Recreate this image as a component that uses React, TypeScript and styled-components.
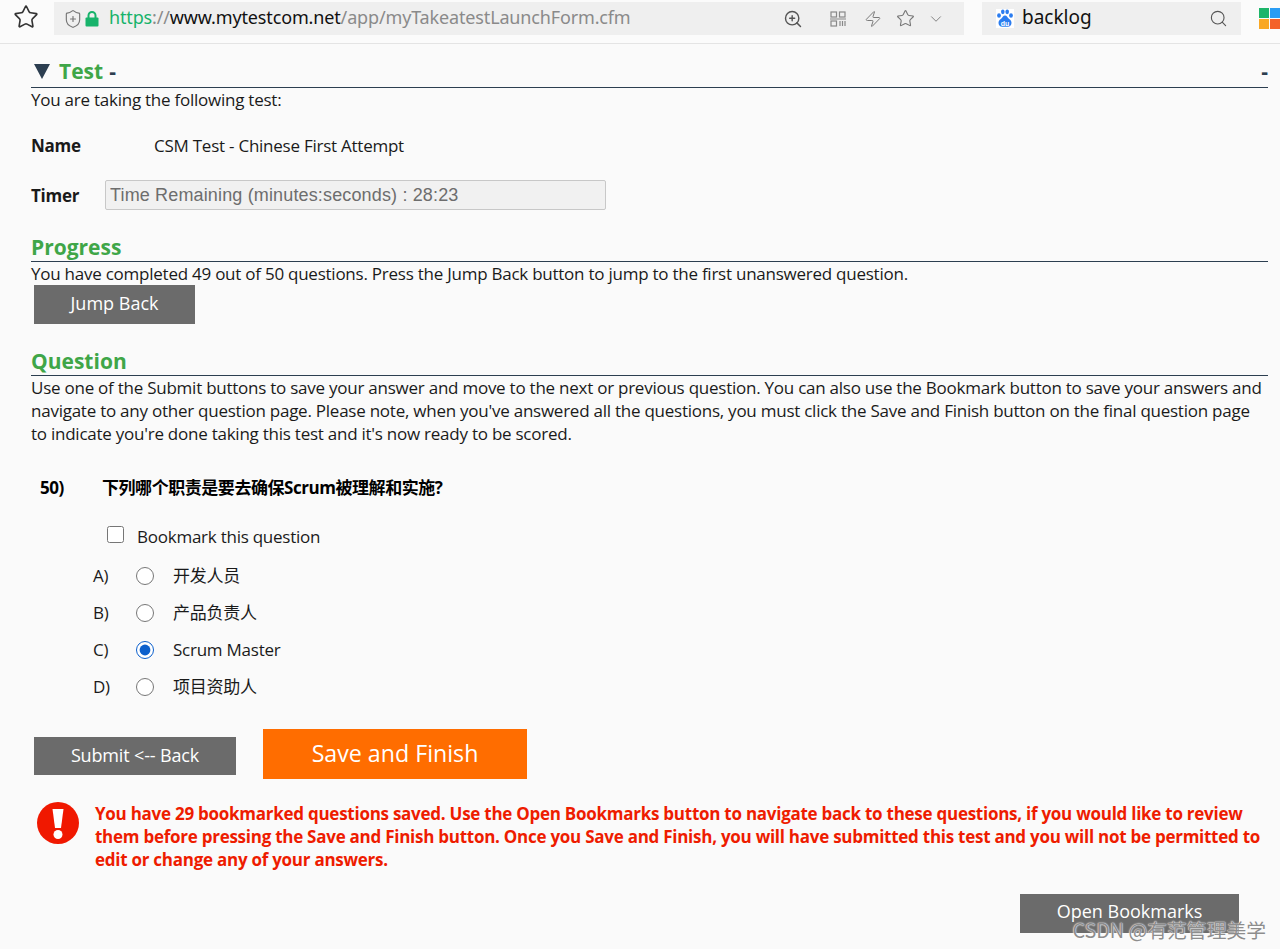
import { ReactNode } from 'react'
import styled, { createGlobalStyle } from 'styled-components'
import { ChevronDown, Search, ShieldPlus, Star, Zap, ZoomIn } from 'lucide-react'

const Global = createGlobalStyle`
html, body {
  margin: 0;
  padding: 0;
  height: 949px;
  overflow: hidden;
  background: #fafafa;
}
body {
  font-family: "Open Sans", "Noto Sans CJK SC", sans-serif;
  font-size: 17px;
  line-height: 23px;
  letter-spacing: -0.245px;
  color: #1a1a1a;
}
`

const Page = styled.div`
  position: relative;
  height: 949px;
  overflow: hidden;
`

const Chrome = styled.header`
  display: flex;
  align-items: flex-start;
  height: 43px;
  border-bottom: 1px solid #e4e4e4;
  background: #fbfbfb;
  box-sizing: content-box;
  letter-spacing: 0;
`

const BarStar = styled.div`
  display: flex;
  width: 54px;
  padding: 4px 0 0 13px;
  box-sizing: border-box;
  color: #333;
`

const UrlBar = styled.div`
  display: flex;
  align-items: center;
  width: 910px;
  height: 33px;
  margin-top: 2px;
  background: #efefef;
  box-sizing: border-box;
  padding-left: 9px;
`

const UrlText = styled.div`
  margin: -2px 0 0 8px;
  width: 669px;
  font-family: "Noto Sans", sans-serif;
  font-size: 18px;
  letter-spacing: -0.15px;
  color: #8a8a8a;
  white-space: nowrap;
`

const Https = styled.span`
  color: #17b36b;
`

const Host = styled.span`
  color: #111;
`

const IconSlot = styled.span<{ $w: number; $color?: string }>`
  display: flex;
  justify-content: center;
  width: ${p => p.$w}px;
  color: ${p => p.$color ?? '#777'};

  svg {
    flex: none;
  }
`

const SearchBar = styled.div`
  display: flex;
  align-items: center;
  width: 259px;
  height: 33px;
  margin: 2px 0 0 18px;
  padding: 0 13px 0 14px;
  box-sizing: border-box;
  background: #efefef;
`

const SearchText = styled.span`
  flex: 1;
  margin: -2px 0 0 8px;
  font-family: "Noto Sans", sans-serif;
  font-size: 19px;
  color: #111;
`

const Tiles = styled.div`
  display: grid;
  grid-template-columns: 10px 10px;
  grid-auto-rows: 10px;
  gap: 1px;
  margin: 8px 0 0 18px;
`

const Tile = styled.span<{ $c: string }>`
  background: ${p => p.$c};
`

const Content = styled.main`
  padding: 13px 12px 0 31px;
`

const Heading = styled.div`
  display: flex;
  align-items: center;
  height: 30px;
  border-bottom: 1px solid #2c3e50;
  box-sizing: content-box;
  font-size: 21px;
  font-weight: 700;
  letter-spacing: 0;
  color: #2c3e50;
`

const TestHeading = styled(Heading)`
  height: 28px;
  padding: 0 0 2px 3px;
`

const Arrow = styled.svg`
  width: 16px;
  height: 15px;
  margin-right: 9px;
`

const Green = styled.span`
  color: #3fa648;
`

const HeadDash = styled.span`
  margin-left: 6px;
  flex: 1;
`

const SubHeading = styled(Heading)`
  height: 27px;
  color: #3fa648;
`

const Text = styled.p`
  margin: 0;
`

const Row = styled.div<{ $mt: number; $labelW: number }>`
  display: grid;
  grid-template-columns: ${p => p.$labelW}px auto;
  align-items: center;
  justify-content: start;
  margin-top: ${p => p.$mt}px;
`

const Label = styled.span`
  font-weight: 700;
`

const Timer = styled.input`
  width: 501px;
  height: 30px;
  box-sizing: border-box;
  padding: 0 4px;
  border: 1px solid #c8c8c8;
  border-radius: 2px;
  background: #f1f1f1;
  font-family: "Liberation Sans", sans-serif;
  font-size: 18px;
  letter-spacing: 0.15px;
  color: #6d6d6d;
  outline: none;
`

const Section = styled.section<{ $mt: number }>`
  margin-top: ${p => p.$mt}px;
`

const GrayButton = styled.button<{ $w: number; $h: number; $lift?: number }>`
  display: block;
  width: ${p => p.$w}px;
  height: ${p => p.$h}px;
  padding: 0 0 ${p => p.$lift ?? 3}px;
  border: 0;
  background: #6b6b6b;
  color: #fff;
  font-family: inherit;
  font-size: 18px;
`

const JumpBack = styled(GrayButton)`
  margin: 0 0 0 3px;
`

const QuestionRow = styled.div`
  display: flex;
  margin: 31px 0 0 9px;
  font-weight: 700;
  letter-spacing: -0.45px;
  color: #000;
`

const QuestionNum = styled.span`
  width: 62px;
`

const BookmarkRow = styled.label`
  display: flex;
  align-items: center;
  height: 23px;
  margin: 26px 0 0 76px;
`

const Check = styled.input`
  width: 17px;
  height: 17px;
  margin: -4px 13px 0 0;
`

const Options = styled.div`
  display: flex;
  flex-direction: column;
  gap: 14px;
  margin: 16px 0 0 62px;
`

const Option = styled.label`
  display: flex;
  align-items: center;
  height: 23px;
`

const Letter = styled.span`
  width: 43px;
`

const Radio = styled.input`
  width: 18px;
  height: 18px;
  margin: 0 19px 0 0;
  accent-color: #0b5fcc;
`

const Actions = styled.div`
  display: flex;
  align-items: flex-end;
  gap: 27px;
  margin: 31px 0 0 3px;
`

const SubmitBack = styled(GrayButton)`
  margin-bottom: 4px;
  letter-spacing: -0.15px;
`

const SaveFinish = styled.button`
  width: 264px;
  height: 50px;
  padding: 0 0 2px;
  border: 0;
  background: #ff6d00;
  color: #fff;
  font-family: inherit;
  font-size: 23.2px;
`

const Warning = styled.div`
  display: flex;
  gap: 16px;
  margin: 23px 0 0 6px;
`

const WarningIcon = styled.svg`
  flex: none;
  width: 42px;
  height: 42px;
`

const WarningText = styled.p`
  margin: 0;
  font-weight: 700;
  letter-spacing: -0.26px;
  color: #ee1c00;
`

const BookmarkWrap = styled.div`
  display: flex;
  justify-content: flex-end;
  margin: 23px 29px 0 0;
`

const Watermark = styled.span`
  position: absolute;
  right: 14px;
  top: 918px;
  font-family: "Noto Sans CJK SC", sans-serif;
  font-size: 19.8px;
  letter-spacing: 0;
  color: #8d8d8d;
  text-shadow: 0 0 2px #fff, 0 0 1px #fff;
  white-space: nowrap;
`

function LockIcon() {
  return (
    <svg width="14" height="16" viewBox="0 0 14 16" fill="#17b36b">
      <path d="M3.500 7V4.500a3.500 3.500 0 0 1 7 0V7" fill="none" stroke="#17b36b" strokeWidth="2" />
      <rect x="0.500" y="6.500" width="13" height="9" rx="1" />
    </svg>
  )
}

function QrIcon() {
  return (
    <svg width="16" height="16" viewBox="0 0 16 16" fill="none" stroke="#888" strokeWidth="1.2">
      <rect x="1" y="1" width="5.500" height="5" />
      <rect x="9.500" y="1" width="5.500" height="5" />
      <rect x="1" y="10" width="5.500" height="5" />
      <path d="M0 8h16M10 10v5M12.500 10v5M15 10v5" />
    </svg>
  )
}

function BaiduIcon() {
  return (
    <svg width="18" height="19" viewBox="0 0 18 19" fill="#2b7df0">
      <rect width="18" height="19" fill="#fff" />
      <ellipse cx="3" cy="6.500" rx="1.900" ry="2.300" />
      <ellipse cx="6.800" cy="2.800" rx="1.800" ry="2.400" />
      <ellipse cx="11.200" cy="2.800" rx="1.800" ry="2.400" />
      <ellipse cx="15" cy="6.500" rx="1.900" ry="2.300" />
      <path d="M9 6.500c-2 0-2.500 2.200-4.200 3.500C3.300 11.100 2.500 12.300 2.500 14c0 2.500 2 4 4 3.800h5c2 .2 4-1.300 4-3.800 0-1.700-.8-2.900-2.300-4C11.500 8.700 11 6.500 9 6.500z" />
      <text x="9" y="16.500" textAnchor="middle" fill="#fff" fontFamily="Liberation Sans" fontSize="7" fontWeight="700">du</text>
    </svg>
  )
}

function Browser() {
  const tiles = ['#1db56a', '#2a9df4', '#f9a825', '#f4622a']
  return (
    <Chrome>
      <BarStar>
        <Star size={26} strokeWidth={1.5} />
      </BarStar>
      <UrlBar>
        <IconSlot $w={20}><ShieldPlus size={20} strokeWidth={1.4} /></IconSlot>
        <IconSlot $w={18}><LockIcon /></IconSlot>
        <UrlText>
          <Https>https</Https>://<Host>www.mytestcom.net</Host>/app/myTakeatestLaunchForm.cfm
        </UrlText>
        <IconSlot $w={30} $color="#555"><ZoomIn size={20} strokeWidth={1.7} /></IconSlot>
        <IconSlot $w={60}><QrIcon /></IconSlot>
        <IconSlot $w={10}><Zap size={18} strokeWidth={1.3} /></IconSlot>
        <IconSlot $w={54}><Star size={19} strokeWidth={1.4} /></IconSlot>
        <IconSlot $w={8}><ChevronDown size={18} strokeWidth={1.2} /></IconSlot>
      </UrlBar>
      <SearchBar>
        <BaiduIcon />
        <SearchText>backlog</SearchText>
        <Search size={19} strokeWidth={1.4} color="#555" />
      </SearchBar>
      <Tiles>
        {tiles.map(c => <Tile key={c} $c={c} />)}
      </Tiles>
    </Chrome>
  )
}

function Answer({ letter, checked, children }: { letter: string; checked?: boolean; children: ReactNode }) {
  return (
    <Option>
      <Letter>{letter}</Letter>
      <Radio type="radio" name="answer" defaultChecked={checked} />
      {children}
    </Option>
  )
}

export default function App() {
  return (
    <Page>
      <Global />
      <Browser />
      <Content>
        <TestHeading>
          <Arrow viewBox="0 0 16 15"><path d="M0 0h16L8 15z" fill="#2c3e50" /></Arrow>
          <Green>Test</Green>
          <HeadDash>-</HeadDash>
          -
        </TestHeading>
        <Text>You are taking the following test:</Text>
        <Row $mt={23} $labelW={123}>
          <Label>Name</Label>
          <span>CSM Test - Chinese First Attempt</span>
        </Row>
        <Row $mt={23} $labelW={74}>
          <Label>Timer</Label>
          <Timer readOnly value="Time Remaining (minutes:seconds) : 28:23" />
        </Row>
        <Section $mt={24}>
          <SubHeading>Progress</SubHeading>
          <Text>You have completed 49 out of 50 questions. Press the Jump Back button to jump to the first unanswered question.</Text>
          <JumpBack $w={161} $h={39}>Jump Back</JumpBack>
        </Section>
        <Section $mt={24}>
          <SubHeading>Question</SubHeading>
          <Text>
            Use one of the Submit buttons to save your answer and move to the next or previous question. You can also use the Bookmark button to save your answers and navigate to any other question page. Please note, when you've answered all the questions, you must click the Save and Finish button on the final question page to indicate you're done taking this test and it's now ready to be scored.
          </Text>
        </Section>
        <QuestionRow>
          <QuestionNum>50)</QuestionNum>
          <span>下列哪个职责是要去确保Scrum被理解和实施?</span>
        </QuestionRow>
        <BookmarkRow>
          <Check type="checkbox" />
          Bookmark this question
        </BookmarkRow>
        <Options>
          <Answer letter="A)">开发人员</Answer>
          <Answer letter="B)">产品负责人</Answer>
          <Answer letter="C)" checked>Scrum Master</Answer>
          <Answer letter="D)">项目资助人</Answer>
        </Options>
        <Actions>
          <SubmitBack $w={202} $h={38}>Submit &lt;-- Back</SubmitBack>
          <SaveFinish>Save and Finish</SaveFinish>
        </Actions>
        <Warning>
          <WarningIcon viewBox="0 0 42 42">
            <circle cx="21" cy="21" r="21" fill="#f01800" />
            <path d="M15.500 7h11l-2.500 19h-6z" fill="#fff" />
            <circle cx="21" cy="32.500" r="4.500" fill="#fff" />
          </WarningIcon>
          <WarningText>
            You have 29 bookmarked questions saved. Use the Open Bookmarks button to navigate back to these questions, if you would like to review them before pressing the Save and Finish button. Once you Save and Finish, you will have submitted this test and you will not be permitted to edit or change any of your answers.
          </WarningText>
        </Warning>
        <BookmarkWrap>
          <GrayButton $w={219} $h={39} $lift={5}>Open Bookmarks</GrayButton>
        </BookmarkWrap>
      </Content>
      <Watermark>CSDN @有范管理美学</Watermark>
    </Page>
  )
}
